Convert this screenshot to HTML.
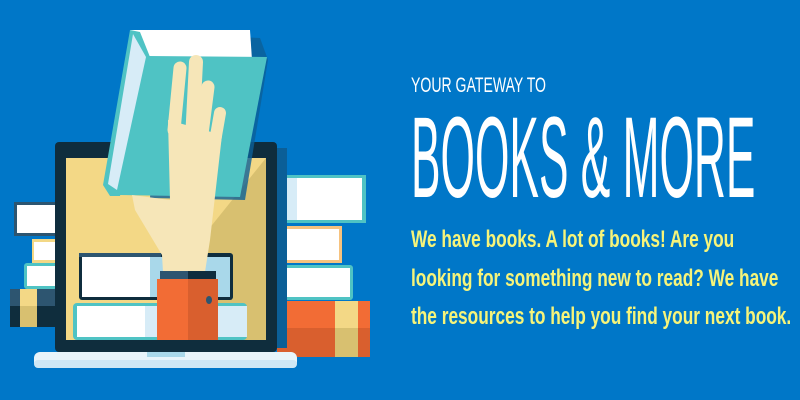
<!DOCTYPE html>
<html><head><meta charset="utf-8"><style>
html,body{margin:0;padding:0}
body{width:800px;height:400px;background:#0077c8;position:relative;overflow:hidden;font-family:"Liberation Sans Narrow","Liberation Sans",sans-serif}
.t{position:absolute;left:411px;white-space:nowrap;transform-origin:0 0;color:#fff}
#a{top:74px;font-size:21px;transform:scaleX(.67)}
#b{top:101px;font-size:115px;line-height:115px;transform:scaleX(.385)}
.p{color:#f6f47a;font-size:24px;font-weight:bold;transform:scaleX(.72)}
</style></head><body>
<svg width="400" height="400" style="position:absolute;left:0;top:0">
<rect x="14" y="202" width="45" height="34" fill="#2d5570"/><rect x="17" y="205" width="40" height="28" fill="#fff"/>
<rect x="32" y="239" width="25" height="24" fill="#f3d886"/><rect x="34" y="242" width="23" height="18" fill="#fff"/>
<rect x="24" y="263" width="33" height="26" rx="3" fill="#4fc3c4"/><rect x="27" y="266" width="30" height="20" fill="#fff"/>
<rect x="10" y="289" width="47" height="38" fill="#0f2d3d"/><rect x="10" y="289" width="47" height="17" fill="#2d5570"/><rect x="20" y="289" width="17" height="38" fill="#d8c070"/><rect x="20" y="289" width="17" height="17" fill="#f3d886"/>
<rect x="277" y="175" width="89" height="48" fill="#4fc3c4"/><rect x="277" y="178" width="85" height="42" fill="#fff"/><rect x="277" y="178" width="20" height="42" fill="#d7ecf7"/>
<rect x="277" y="226" width="65" height="37" fill="#f6c27e"/><rect x="277" y="229" width="62" height="31" fill="#fff"/>
<rect x="277" y="265" width="76" height="35" rx="3" fill="#4fc3c4"/><rect x="277" y="268" width="73" height="29" fill="#fff"/>
<rect x="277" y="301" width="93" height="56" fill="#d95f2e"/><rect x="277" y="301" width="93" height="27" fill="#f26c35"/><rect x="335" y="301" width="23" height="56" fill="#d8c070"/><rect x="335" y="301" width="23" height="27" fill="#f3d886"/>
<rect x="277" y="148" width="10" height="200" fill="#0b5f97"/>
<rect x="55" y="142" width="222" height="210" rx="4" fill="#0f2d3d"/>
<rect x="66" y="158" width="200" height="182" fill="#f3d886"/>
<polygon points="266,158 266,340 200,340 200,240" fill="#d8c070"/>
<rect x="34" y="352" width="263" height="16" rx="6" fill="#e8f4fa"/><rect x="34" y="360" width="263" height="8" rx="4" fill="#cfe8f5"/><rect x="147" y="352" width="38" height="5" fill="#a9d8ea"/>
<rect x="79" y="253" width="154" height="47" rx="3" fill="#0f2d3d"/><rect x="82" y="257" width="148" height="40" fill="#fff"/><rect x="150" y="257" width="80" height="40" fill="#a9d8ea"/><rect x="79" y="253" width="82" height="4" fill="#2d5570"/>
<rect x="73" y="303" width="174" height="37" rx="4" fill="#4fc3c4"/><rect x="77" y="306" width="170" height="31" fill="#fff"/><rect x="145" y="306" width="102" height="31" fill="#d7ecf7"/>
<polygon points="160,34 260,38 268,60 245,200 150,198" fill="#0b5f97" opacity=".8"/>
<polygon points="130,30 250,30 252,60 148,57" fill="#fff"/>
<polygon points="130,30 140,32 150,57 120,196 110,196 103,185" fill="#4fc3c4"/>
<polygon points="133,34 146,57 117,190 108,184" fill="#d7ecf7"/>
<polygon points="148,56 267,57 240,197 118,195" fill="#4fc3c4"/>
<g stroke="#f6e6b8" stroke-linecap="round" fill="none">
<line x1="180" y1="68" x2="174" y2="130" stroke-width="13"/>
<line x1="196" y1="62" x2="192" y2="140" stroke-width="14"/>
<line x1="208" y1="87" x2="200" y2="150" stroke-width="13"/>
<line x1="220" y1="113" x2="210" y2="170" stroke-width="12"/>
</g>
<polygon points="168,120 222,135 210,240 205,272 163,272 162,255 135,210 132,195 170,200" fill="#f6e6b8"/>
<rect x="160" y="271" width="56" height="9" fill="#2d5570"/><rect x="188" y="271" width="28" height="9" fill="#0f2d3d"/>
<rect x="157" y="279" width="61" height="61" fill="#f26c35"/><rect x="188" y="279" width="30" height="61" fill="#d95f2e"/><ellipse cx="209" cy="300" rx="3" ry="4" fill="#2d5570"/>
</svg>
<div class="t" id="a">YOUR GATEWAY TO</div>
<div class="t" id="b">BOOKS &amp; MORE</div>
<div class="t p" style="top:226px">We have books. A lot of books! Are you</div>
<div class="t p" style="top:265px">looking for something new to read? We have</div>
<div class="t p" style="top:303px">the resources to help you find your next book.</div>
</body></html>
